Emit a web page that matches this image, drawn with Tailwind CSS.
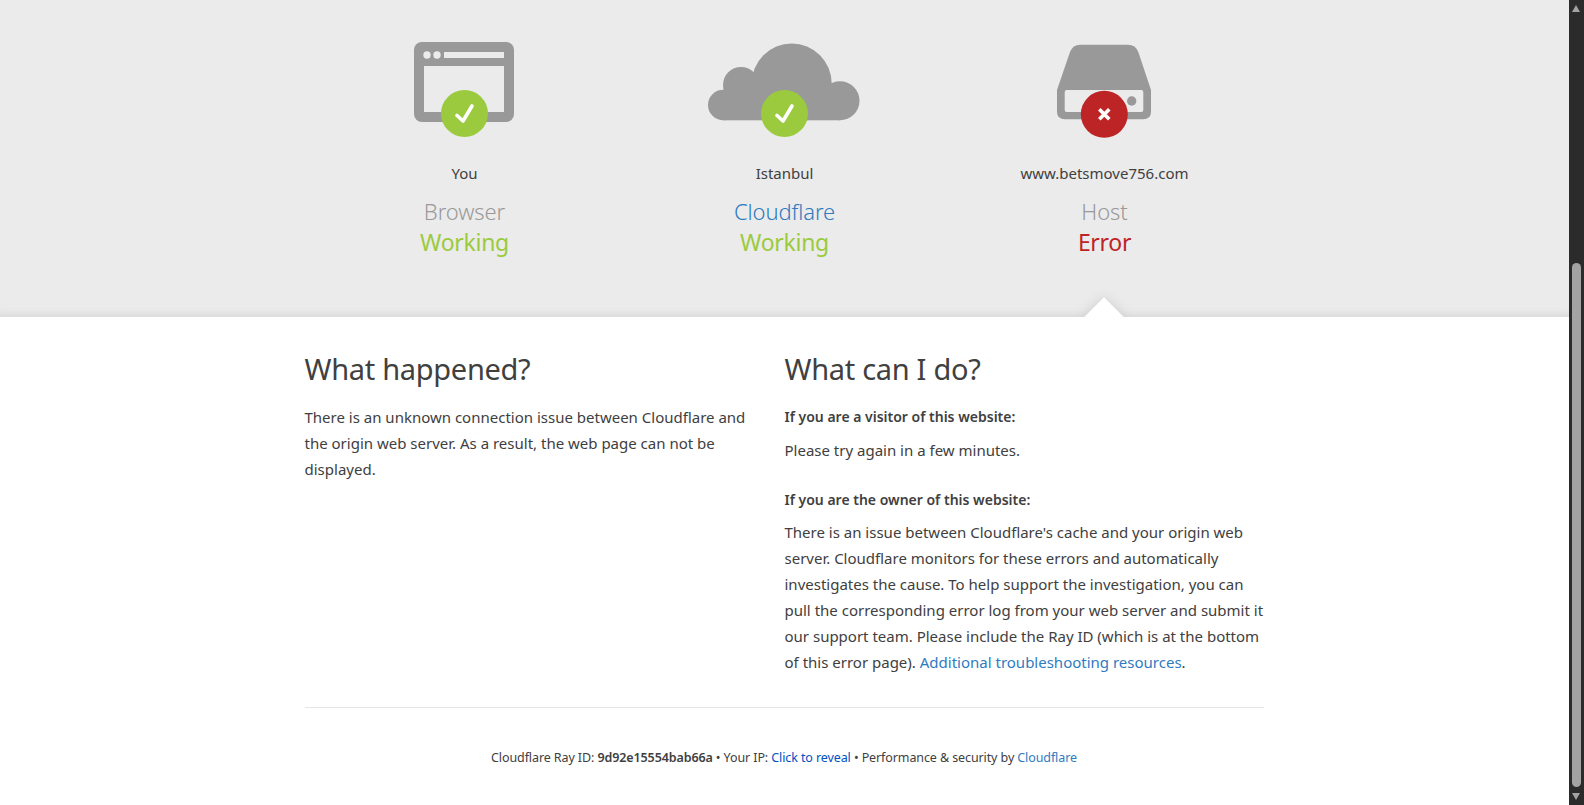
<!DOCTYPE html>
<html lang="en">
<head>
  <meta charset="UTF-8">
  <meta name="viewport" content="width=device-width, initial-scale=1.0">
  <title>www.betsmove756.com | 520: Web server is returning an unknown error</title>
  <script src="https://cdn.jsdelivr.net/npm/@tailwindcss/browser@4"></script>
</head>
<body class="flex h-[805px] overflow-hidden bg-white font-['Noto_Sans',sans-serif] text-[15px] leading-[26px] text-[#404040]">

  <main class="w-[1569px]">
    <!-- Status row -->
    <section class="relative h-[317px] overflow-hidden bg-[#ebebeb] pt-10 shadow-[inset_0_-12px_12px_-12px_rgba(0,0,0,0.12)]">
      <div class="mx-auto grid w-[960px] grid-cols-3 text-center">

        <div class="flex flex-col items-center">
          <svg class="h-[100px] w-[200px]" viewBox="365 40 200 100">
            <rect x="414" y="42" width="100" height="80" rx="8" fill="#999"/>
            <rect x="424" y="66" width="80" height="46" fill="#ebebeb"/>
            <rect x="444" y="52" width="60" height="6" fill="#ebebeb"/>
            <circle cx="427" cy="55" r="3.7" fill="#ebebeb"/>
            <circle cx="437" cy="55" r="3.7" fill="#ebebeb"/>
            <circle cx="464.5" cy="113.500" r="23.5" fill="#9bca3e"/>
            <path d="M457 115.500l6 5.500 9-15" fill="none" stroke="#fff" stroke-width="3.6" stroke-linecap="round" stroke-linejoin="round"/>
          </svg>
          <span class="mt-[23px] leading-5">You</span>
          <h3 class="mt-[14px] text-[22px] font-light leading-[29px] tracking-[-0.1px] text-[#999]">Browser</h3>
          <span class="text-[23px] leading-[32px] tracking-[-0.3px] text-[#9bca3e]">Working</span>
        </div>

        <div class="flex flex-col items-center">
          <svg class="h-[100px] w-[200px]" viewBox="685 40 200 100">
            <g fill="#999">
              <circle cx="723.3" cy="105" r="15.3"/>
              <circle cx="741" cy="85" r="18"/>
              <circle cx="791.7" cy="83.5" r="40"/>
              <circle cx="840" cy="100.8" r="19.5"/>
              <rect x="723" y="95" width="117" height="25.3"/>
            </g>
            <circle cx="784.5" cy="113.500" r="23.5" fill="#9bca3e"/>
            <path d="M777 115.500l6 5.500 9-15" fill="none" stroke="#fff" stroke-width="3.6" stroke-linecap="round" stroke-linejoin="round"/>
          </svg>
          <span class="mt-[23px] leading-5">Istanbul</span>
          <h3 class="mt-[14px] text-[22px] font-light leading-[29px] tracking-[-0.1px] text-[#2f7bbf]">Cloudflare</h3>
          <span class="text-[23px] leading-[32px] tracking-[-0.3px] text-[#9bca3e]">Working</span>
        </div>

        <div class="flex flex-col items-center">
          <svg class="h-[100px] w-[200px]" viewBox="1005 40 200 100">
            <path d="M1057 90L1070 52Q1073 44.7 1080 44.7H1128Q1135.500 44.700 1138.300 52L1151 90V111.700Q1151 119.300 1143 119.300H1065Q1057 119.300 1057 111.700Z" fill="#999"/>
            <rect x="1064.700" y="90" width="78.600" height="22" rx="2" fill="#ebebeb"/>
            <circle cx="1131.700" cy="101" r="4.700" fill="#999"/>
            <circle cx="1104.300" cy="114.300" r="23.500" fill="#bd2426"/>
            <path d="M1099.300 109.300l10 10m0-10l-10 10" fill="none" stroke="#fff" stroke-width="3.600"/>
          </svg>
          <span class="mt-[23px] leading-5">www.betsmove756.com</span>
          <h3 class="mt-[14px] text-[22px] font-light leading-[29px] tracking-[-0.1px] text-[#999]">Host</h3>
          <span class="text-[23px] leading-[32px] tracking-[-0.3px] text-[#bd2426]">Error</span>
        </div>
      </div>
      <!-- pointer under the failing column -->
      <div class="absolute left-[1090px] top-[303px] size-[28px] rotate-45 bg-white shadow-[0_0_14px_rgba(0,0,0,0.12)]"></div>
    </section>

    <!-- Explanation -->
    <section class="mx-auto w-[960px] pt-[34px]">
      <div class="grid grid-cols-2">
        <div class="pr-4">
          <h2 class="mb-[17px] text-[29px] leading-9 tracking-[-0.3px]">What happened?</h2>
          <p>There is an unknown connection issue between Cloudflare and the origin web server. As a result, the web page can not be displayed.</p>
        </div>
        <div>
          <h2 class="mb-[17px] text-[29px] leading-9 tracking-[-0.3px]">What can I do?</h2>
          <h5 class="text-sm/[26px] font-semibold">If you are a visitor of this website:</h5>
          <p class="mt-[7px]">Please try again in a few minutes.</p>
          <h5 class="mt-6 text-sm/[26px] font-semibold">If you are the owner of this website:</h5>
          <p class="mt-1.5">There is an issue between Cloudflare's cache and your origin web server. Cloudflare monitors for these errors and automatically investigates the cause. To help support the investigation, you can pull the corresponding error log from your web server and submit it our support team. Please include the Ray ID (which is at the bottom of this error page). <a href="#" class="text-[#2f7bbf]">Additional troubleshooting resources</a>.</p>
        </div>
      </div>

      <footer class="mr-px mt-8 border-t border-[#e5e5e5] pt-10 text-center text-[12.5px] leading-5 tracking-[-0.1px]">
        Cloudflare Ray ID: <strong class="font-semibold">9d92e15554bab66a</strong> • Your IP: <a href="#" class="text-[#0051c3]">Click to reveal</a> • Performance &amp; security by <a href="#" class="text-[#2f7bbf]">Cloudflare</a>
      </footer>
    </section>
  </main>

  <!-- Scrollbar -->
  <aside class="relative h-[805px] w-[15px] bg-[#2b2b2b]">
    <div class="absolute left-[3px] top-[5px] size-0 border-x-[4.500px] border-b-[7px] border-x-transparent border-b-[#a3a3a3]"></div>
    <div class="absolute left-[3px] top-[263px] h-[524px] w-[9px] rounded-[5px] bg-[#a3a3a3]"></div>
    <div class="absolute bottom-[5px] left-[3px] size-0 border-x-[4.500px] border-t-[7px] border-x-transparent border-t-[#a3a3a3]"></div>
  </aside>
</body>
</html>
